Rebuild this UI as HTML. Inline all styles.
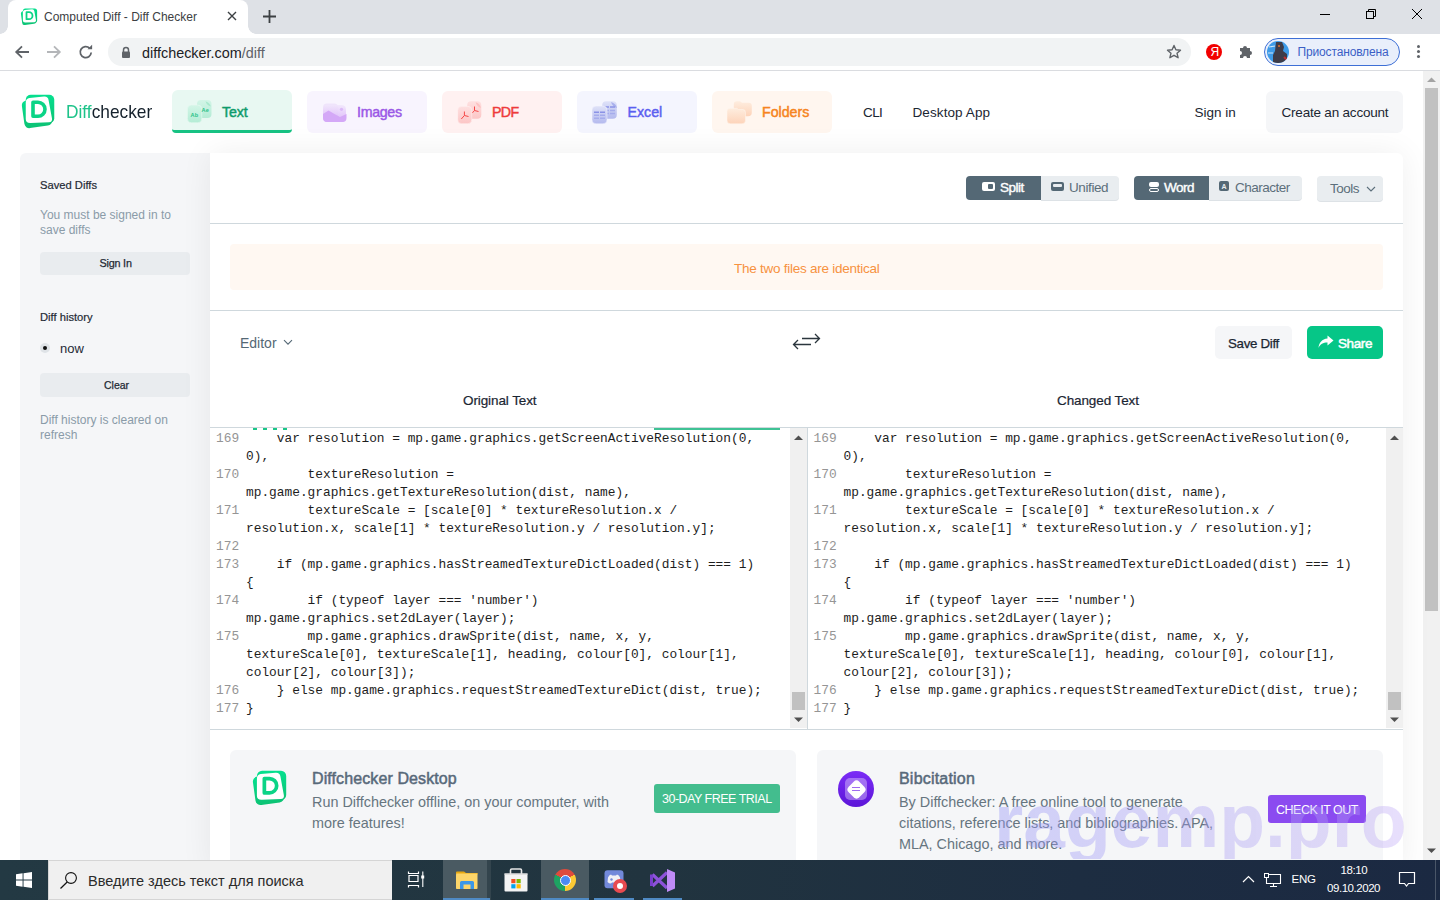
<!DOCTYPE html>
<html><head><meta charset="utf-8">
<style>
*{margin:0;padding:0;box-sizing:border-box}
html,body{width:1440px;height:900px;overflow:hidden;background:#fff;font-family:"Liberation Sans",sans-serif;color:#212529}
.a{position:absolute}
.t{position:absolute;white-space:pre;line-height:1}
.mono{font-family:"Liberation Mono",monospace}
/* chrome */
#strip{left:0;top:0;width:1440px;height:34px;background:#dee1e6}
#tab{left:8px;top:0;width:240px;height:34px;background:#fff;border-radius:8px 8px 0 0}
#tab:before,#tab:after{content:"";position:absolute;bottom:0;width:8px;height:8px;background:radial-gradient(circle at 0 0,transparent 8px,#fff 8.5px)}
#tab:before{left:-8px;background:radial-gradient(circle at 0 0,transparent 7.5px,#fff 8px)}
#tab:after{right:-8px;background:radial-gradient(circle at 100% 0,transparent 7.5px,#fff 8px)}
#toolbar{left:0;top:34px;width:1440px;height:36px;background:#fff}
#tbline{left:0;top:70px;width:1440px;height:1px;background:#dadce0}
#omni{left:108px;top:38px;width:1083px;height:28px;border-radius:14px;background:#f1f3f4}
/* page */
#vscroll{left:1423px;top:71px;width:17px;height:789px;background:#f1f1f1}
#vthumb{left:1425px;top:88px;width:13px;height:523px;background:#c1c1c1}
.navtab{position:absolute;top:91px;height:42px;border-radius:6px}
.navtxt{position:absolute;top:104.5px;font-size:14.2px;font-weight:400;line-height:1;white-space:pre;letter-spacing:-0.3px;-webkit-text-stroke:0.45px currentColor}
#side{left:20px;top:153px;width:190px;height:720px;background:#f5f6f8;border-radius:6px 0 0 0}
#main{left:210px;top:153px;width:1193px;height:720px;background:#fff;border-radius:0 6px 0 0;box-shadow:0 0 32px rgba(0,0,0,0.065)}
.sbtn{position:absolute;left:40px;width:150px;height:23px;background:#e9ecef;border-radius:4px}
.tog{position:absolute;top:176px;height:24px}
.hr{position:absolute;left:210px;width:1193px;height:1px;background:#cfd8dd}
.code{position:absolute;font-family:"Liberation Mono",monospace;font-size:12.83px;line-height:18px;white-space:pre;color:#1d1d1d}
.ln{position:absolute;font-family:"Liberation Mono",monospace;font-size:12.83px;line-height:18px;white-space:pre;color:#959595}
#taskbar{left:0;top:860px;width:1440px;height:40px;background:linear-gradient(90deg,#233943 0%,#21343f 45%,#1d2d41 75%,#1b2942 100%)}
</style></head><body>

<svg width="0" height="0" style="position:absolute">
 <defs><linearGradient id="lgg" x1="0" y1="0" x2="0" y2="1"><stop offset="0" stop-color="#06e08f"/><stop offset="1" stop-color="#0cc274"/></linearGradient></defs></svg>
<!-- ============ CHROME ============ -->
<div id="strip" class="a"></div>
<div id="tab" class="a"></div>
<!-- favicon -->
<svg class="a" style="left:19.5px;top:8px" width="18" height="18" viewBox="0 0 36 36">
 <rect x="5.75" y="0.75" width="28.5" height="28.5" rx="5" fill="url(#lgg)"/>
 <rect x="3" y="5" width="28" height="28" rx="5" fill="url(#lgg)" transform="rotate(-8 17 19)"/>
 <path d="M5.75 8.5Q5.75 4.5 9.5 4L24 2.6Q28 2.3 28.6 6.2L32 24.5Q32.5 28 29 28.3L10.5 29Q5.75 29.2 5.75 25z" fill="#fff"/>
 <path d="M13 8.3h5a7 7 0 0 1 0 14h-5z" fill="none" stroke="#0bd486" stroke-width="3.6" stroke-linejoin="round"/>
 </svg>
<div class="t" style="left:44px;top:11px;font-size:12px;color:#3c4043">Computed Diff - Diff Checker</div>
<svg class="a" style="left:227px;top:11px" width="10" height="10" viewBox="0 0 10 10"><path d="M1 1L9 9M9 1L1 9" stroke="#3c4043" stroke-width="1.4"/></svg>
<svg class="a" style="left:262px;top:9px" width="15" height="15" viewBox="0 0 15 15"><path d="M7.5 1v13M1 7.5h13" stroke="#3c4043" stroke-width="1.8"/></svg>
<!-- window controls -->
<div class="a" style="left:1320px;top:14px;width:10px;height:1px;background:#000"></div>
<svg class="a" style="left:1365px;top:8px" width="12" height="12" viewBox="0 0 12 12"><path d="M3.5 3V1.5h7v7H9" fill="none" stroke="#000" stroke-width="1"/><rect x="1.5" y="3.5" width="7" height="7" fill="none" stroke="#000" stroke-width="1"/></svg>
<svg class="a" style="left:1411px;top:8px" width="12" height="12" viewBox="0 0 12 12"><path d="M1 1L11 11M11 1L1 11" stroke="#000" stroke-width="1"/></svg>

<div id="toolbar" class="a"></div>
<div id="tbline" class="a"></div>
<svg class="a" style="left:14px;top:44px" width="16" height="16" viewBox="0 0 16 16"><path d="M15 8H2.5M8 2.3L2.2 8L8 13.7" fill="none" stroke="#5f6368" stroke-width="1.8"/></svg>
<svg class="a" style="left:46px;top:44px" width="16" height="16" viewBox="0 0 16 16"><path d="M1 8H13.5M8 2.3L13.8 8L8 13.7" fill="none" stroke="#b4b6b9" stroke-width="1.8"/></svg>
<svg class="a" style="left:78px;top:44px" width="16" height="16" viewBox="0 0 16 16"><path d="M13.2 8.5A5.5 5.5 0 1 1 11.6 4.2" fill="none" stroke="#5f6368" stroke-width="1.8"/><path d="M9.5 5.3h4.6V0.8z" fill="#5f6368"/></svg>
<div id="omni" class="a"></div>
<svg class="a" style="left:121px;top:46px" width="10" height="13" viewBox="0 0 10 13"><path d="M2.5 6V4a2.5 2.5 0 0 1 5 0v2" fill="none" stroke="#5f6368" stroke-width="1.5"/><rect x="1" y="5.5" width="8" height="6.5" rx="1" fill="#5f6368"/></svg>
<div class="t" style="left:142px;top:46px;font-size:14.4px;color:#202124">diffchecker.com<span style="color:#5f6368">/diff</span></div>
<!-- star -->
<svg class="a" style="left:1166px;top:44px" width="16" height="16" viewBox="0 0 16 16"><path d="M8 1.5l1.9 4.3 4.6.4-3.5 3 1.1 4.5L8 11.3l-4.1 2.4L5 9.2 1.5 6.2l4.6-.4z" fill="none" stroke="#5f6368" stroke-width="1.4" stroke-linejoin="round"/></svg>
<!-- yandex -->
<div class="a" style="left:1206px;top:44px;width:16px;height:16px;border-radius:50%;background:#f20000"></div>
<div class="t" style="left:1210.5px;top:45.5px;font-size:12px;color:#fff">Я</div>
<!-- puzzle -->
<svg class="a" style="left:1238px;top:44px" width="16" height="16" viewBox="0 0 16 16"><path d="M2 4h3a2 2 0 0 1 4 0h3v3a2 2 0 0 1 0 4v3H9a2 2 0 0 0-4 0H2v-3a2 2 0 0 0 0-4z" fill="#5f6368"/></svg>
<!-- profile pill -->
<div class="a" style="left:1264px;top:38px;width:136px;height:28px;border-radius:14px;background:#e9effb;border:1.5px solid #3d6fd6"></div>
<svg class="a" style="left:1267px;top:41px" width="22" height="22" viewBox="0 0 22 22"><defs><clipPath id="avc"><circle cx="11" cy="11" r="11"/></clipPath></defs><g clip-path="url(#avc)"><rect width="22" height="22" fill="#3d9be8"/><path d="M2 6l6-1M1 12l5 0" stroke="#cfe6f7" stroke-width="1.2"/><path d="M9 1h6l2 5-1 4 4 3v9H6v-8l2-4z" fill="#3e3c48"/><circle cx="12" cy="5" r="1" fill="#e0702a"/><path d="M17 16l3 3" stroke="#c03030" stroke-width="2"/></g></svg>
<div class="t" style="left:1297.5px;top:46px;font-size:12px;color:#3b5fc6;letter-spacing:-0.15px">Приостановлена</div>
<div class="a" style="left:1417px;top:45px;width:3px;height:3px;border-radius:50%;background:#5f6368;box-shadow:0 5px 0 #5f6368,0 10px 0 #5f6368"></div>

<!-- ============ PAGE ============ -->
<div id="vscroll" class="a"></div>
<div id="vthumb" class="a"></div>
<svg class="a" style="left:1427px;top:77px" width="9" height="6" viewBox="0 0 9 6"><path d="M0 5L4.5 0.5L9 5z" fill="#a3a3a3"/></svg>
<svg class="a" style="left:1427px;top:848px" width="9" height="6" viewBox="0 0 9 6"><path d="M0 0.5L4.5 5L9 0.5z" fill="#505050"/></svg>


<!-- ============ HEADER ============ -->
<svg class="a" style="left:20px;top:94px" width="36" height="36" viewBox="0 0 36 36">
 <rect x="5.75" y="0.75" width="28.5" height="28.5" rx="5" fill="url(#lgg)"/>
 <rect x="3" y="5" width="28" height="28" rx="5" fill="url(#lgg)" transform="rotate(-8 17 19)"/>
 <path d="M5.75 8.5Q5.75 4.5 9.5 4L24 2.6Q28 2.3 28.6 6.2L32 24.5Q32.5 28 29 28.3L10.5 29Q5.75 29.2 5.75 25z" fill="#fff"/>
 <path d="M13 8.3h5a7 7 0 0 1 0 14h-5z" fill="none" stroke="#0bd486" stroke-width="3.6" stroke-linejoin="round"/>
 </svg>
<div class="t" style="left:65.5px;top:102px;font-size:19px;transform:scaleX(0.91);transform-origin:0 0"><span style="color:#1ec38a">Diff</span><span style="color:#14202b">checker</span></div>

<div class="navtab" style="left:172px;width:120px;height:43px;top:90px;background:#e8f8f2;border-bottom:3px solid #17c283;border-radius:6px 6px 4px 4px"></div>
<svg class="a" style="left:186px;top:99px" width="28" height="26" viewBox="0 0 28 26">
  <defs><linearGradient id="tg" x1="0" y1="0" x2="0" y2="1"><stop offset="0" stop-color="#d3f5e7"/><stop offset="1" stop-color="#b4ecd5"/></linearGradient></defs>
  <rect x="11" y="1" width="14.5" height="18" rx="4" fill="url(#tg)"/>
  <path d="M19.5 2.2Q24 4 24.8 7.5Q21 6.5 19.5 2.2z" fill="#a6e8cc"/>
  <rect x="1.4" y="6" width="14.4" height="17.8" rx="4" fill="url(#tg)" stroke="#e9f8f2" stroke-width="0.6"/>
  <text x="4.6" y="17.8" font-size="5.6" font-weight="700" fill="#2cc288" font-family="Liberation Sans">Ab</text>
  <text x="15.6" y="12.5" font-size="5.6" font-weight="700" fill="#2cc288" font-family="Liberation Sans">Ae</text>
</svg>
<div class="navtxt" style="left:222px;color:#0e9b6b;letter-spacing:-0.1px">Text</div>

<div class="navtab" style="left:307px;width:120px;background:#f8f4fe"></div>
<svg class="a" style="left:322px;top:102px" width="25" height="21" viewBox="0 0 25 21">
  <defs><linearGradient id="ig" x1="0" y1="0" x2="0" y2="1"><stop offset="0" stop-color="#f1e6fc"/><stop offset="1" stop-color="#d6acf8"/></linearGradient></defs>
  <rect x="1" y="1.5" width="15" height="17" rx="4" fill="#efe4fb"/>
  <rect x="1" y="3" width="23" height="17" rx="4.5" fill="url(#ig)" opacity="0.85"/>
  <path d="M1 12l5.5-3.5 6 3.5 5.5 3 6.5-3v4a4 4 0 0 1-4 4H5a4 4 0 0 1-4-4z" fill="#d4a8f7"/>
  <circle cx="19.5" cy="7.3" r="1.6" fill="#dcbaf8"/>
</svg>
<div class="navtxt" style="left:357px;color:#9a58e6">Images</div>

<div class="navtab" style="left:442px;width:120px;background:#fff1f1"></div>
<svg class="a" style="left:456px;top:100px" width="27" height="25" viewBox="0 0 27 25">
  <defs><linearGradient id="pg" x1="0" y1="0" x2="0" y2="1"><stop offset="0" stop-color="#fee0e0"/><stop offset="1" stop-color="#fcc6c6"/></linearGradient></defs>
  <rect x="11.2" y="1.3" width="14.1" height="17.4" rx="4" fill="url(#pg)"/>
  <path d="M19.5 2.3Q24 3.5 25 8Q21 7 19.5 2.3z" fill="#fcc2c2"/>
  <rect x="1.7" y="6.3" width="14.1" height="17.4" rx="4" fill="url(#pg)" stroke="#fff4f4" stroke-width="0.5"/>
  <path d="M8.4 15.5V11.5M8.4 15.5L5.3 19M8.4 15.5L12.5 16.5" stroke="#f64747" stroke-width="1" fill="none"/>
  <path d="M18.5 10.5V6.5M18.5 10.5L16.5 12.8M18.5 10.5L22.5 11.5" stroke="#f64747" stroke-width="1" fill="none"/>
</svg>
<div class="navtxt" style="left:492px;color:#ee3b3b;letter-spacing:-0.6px">PDF</div>

<div class="navtab" style="left:577px;width:120px;background:#f4f5fe"></div>
<svg class="a" style="left:591px;top:100px" width="27" height="25" viewBox="0 0 27 25">
  <defs><linearGradient id="xg" x1="0" y1="0" x2="0" y2="1"><stop offset="0" stop-color="#dfe2f8"/><stop offset="1" stop-color="#b3b9ee"/></linearGradient></defs>
  <rect x="11.2" y="1.2" width="14.6" height="17.5" rx="4" fill="url(#xg)"/>
  <path d="M20 2Q25 3.5 26 8Q21.5 7 20 2z" fill="#a9b0ec"/>
  <path d="M13 7h5M19 7h5" stroke="#8a92e6" stroke-width="1.6"/>
  <path d="M13 10.5h5M19 10.5h5M13 13.5h5M19 13.5h5" stroke="#a5acec" stroke-width="1.6"/>
  <rect x="1" y="6" width="15" height="17.8" rx="4" fill="url(#xg)" stroke="#f4f5fe" stroke-width="0.5"/>
  <path d="M3 12.3h5M9 12.3h5" stroke="#8a92e6" stroke-width="1.6"/>
  <path d="M3 15.3h5M9 15.3h5M3 18.3h5M9 18.3h5" stroke="#a5acec" stroke-width="1.6"/>
</svg>
<div class="navtxt" style="left:627.5px;color:#5b5ff0;letter-spacing:0px">Excel</div>

<div class="navtab" style="left:712px;width:120px;background:#fff6ef"></div>
<svg class="a" style="left:726px;top:100px" width="27" height="25" viewBox="0 0 27 25">
  <defs><linearGradient id="fg" x1="0" y1="0" x2="0" y2="1"><stop offset="0" stop-color="#feeddf"/><stop offset="1" stop-color="#fdd3b9"/></linearGradient></defs>
  <path d="M7.8 4.5Q7.8 1.3 11 1.3h2.5Q15 1.3 16 2.8h6.8Q25.8 2.8 25.8 6V12.5Q25.8 16.3 22 16.3H11.5Q7.8 16.3 7.8 12.5z" fill="url(#fg)"/>
  <path d="M1 11.3Q1 8.3 4 8.3h6.5Q11.5 8.3 12.3 9.5h4.7Q19.5 9.5 19.5 12.5V20.3Q19.5 23.8 16 23.8H4.5Q1 23.8 1 20.3z" fill="url(#fg)" stroke="#fff6ef" stroke-width="0.5"/>
</svg>
<div class="navtxt" style="left:762px;color:#f68420;letter-spacing:0px">Folders</div>

<div class="t" style="left:863px;top:105.5px;font-size:13.5px;color:#1b2632;letter-spacing:-0.6px">CLI</div>
<div class="t" style="left:912.5px;top:105.5px;font-size:13.5px;color:#1b2632;letter-spacing:0.1px">Desktop App</div>
<div class="t" style="left:1194.5px;top:105.5px;font-size:13.5px;color:#1b2632;letter-spacing:0px">Sign in</div>
<div class="a" style="left:1266px;top:91px;width:137px;height:42px;border-radius:6px;background:#f5f6f8"></div>
<div class="t" style="left:1281.5px;top:105.5px;font-size:13.5px;color:#1b2632;letter-spacing:-0.2px">Create an account</div>


<!-- ============ SIDEBAR ============ -->
<div id="side" class="a"></div>
<div class="t" style="left:40px;top:180px;font-size:11.2px;color:#1f2a35;-webkit-text-stroke:0.2px currentColor">Saved Diffs</div>
<div class="t" style="left:40px;top:207.5px;font-size:12px;color:#8a9ba8;line-height:15px">You must be signed in to
save diffs</div>
<div class="sbtn" style="top:252px"></div>
<div class="t" style="left:99.5px;top:258px;font-size:10.8px;color:#1f2a35;letter-spacing:-0.2px;-webkit-text-stroke:0.25px currentColor">Sign In</div>
<div class="t" style="left:40px;top:311.5px;font-size:11.2px;color:#1f2a35;-webkit-text-stroke:0.2px currentColor">Diff history</div>
<div class="a" style="left:40px;top:343px;width:10px;height:10px;border-radius:50%;background:#dfe3e7"></div>
<div class="a" style="left:43px;top:346px;width:4px;height:4px;border-radius:50%;background:#111"></div>
<div class="t" style="left:60px;top:342px;font-size:13px;color:#1f2a35">now</div>
<div class="sbtn" style="top:373px;height:24px"></div>
<div class="t" style="left:104px;top:380px;font-size:10.5px;color:#1f2a35;-webkit-text-stroke:0.25px currentColor">Clear</div>
<div class="t" style="left:40px;top:413px;font-size:12px;color:#8a9ba8;line-height:15px">Diff history is cleared on
refresh</div>

<!-- ============ MAIN PANEL ============ -->
<div id="main" class="a"></div>
<!-- toggles -->
<div class="tog a" style="left:966px;width:75px;background:#546875;border-radius:4px 0 0 4px"></div>
<div class="tog a" style="left:1041px;width:78px;background:#e9edf0;border-radius:0 4px 4px 0;box-shadow:0 1px 0 #dde2e6"></div>
<div class="a" style="left:982px;top:182px;width:13px;height:9px;border-radius:2px;background:#fff"></div>
<div class="a" style="left:988px;top:184px;width:5px;height:5px;border-radius:1px;background:#546875"></div>
<div class="t" style="left:1000px;top:181px;font-size:13.5px;color:#fff;letter-spacing:-0.5px;-webkit-text-stroke:0.4px currentColor">Split</div>
<div class="a" style="left:1051px;top:182px;width:13px;height:9px;border-radius:2px;background:#546875"></div>
<div class="a" style="left:1053px;top:184px;width:9px;height:3px;border-radius:1px;background:#e9edf0"></div>
<div class="t" style="left:1069px;top:181px;font-size:13.5px;color:#5c6f7b;letter-spacing:-0.4px">Unified</div>

<div class="tog a" style="left:1134px;width:75px;background:#546875;border-radius:4px 0 0 4px"></div>
<div class="tog a" style="left:1209px;width:93px;background:#e9edf0;border-radius:0 4px 4px 0;box-shadow:0 1px 0 #dde2e6"></div>
<div class="a" style="left:1149px;top:182px;width:10px;height:5px;border-radius:2px;background:#fff"></div>
<div class="a" style="left:1149px;top:188px;width:10px;height:4px;border-radius:2px;border:1.2px solid #fff"></div>
<div class="t" style="left:1164px;top:181px;font-size:13.5px;color:#fff;letter-spacing:-0.5px;-webkit-text-stroke:0.4px currentColor">Word</div>
<div class="a" style="left:1219px;top:181px;width:10px;height:10px;border-radius:2px;background:#546875"></div>
<div class="t" style="left:1221.5px;top:183px;font-size:7px;font-weight:700;color:#e9edf0">A</div>
<div class="t" style="left:1235px;top:181px;font-size:13.5px;color:#5c6f7b;letter-spacing:-0.5px">Character</div>

<div class="tog a" style="left:1317px;width:66px;background:#e9edf0;border-radius:4px;height:25px;box-shadow:0 1px 0 #dde2e6"></div>
<div class="t" style="left:1330px;top:182px;font-size:13.5px;color:#5c6f7b;letter-spacing:-0.5px">Tools</div>
<svg class="a" style="left:1366px;top:186px" width="10" height="6" viewBox="0 0 10 6"><path d="M1 1l4 4 4-4" fill="none" stroke="#5c6f7b" stroke-width="1.1"/></svg>

<div class="hr" style="top:223px"></div>
<!-- banner -->
<div class="a" style="left:230px;top:244px;width:1153px;height:46px;background:#fff8f2;border-radius:4px"></div>
<div class="t" style="left:734px;top:262px;font-size:13.5px;color:#f7923f;letter-spacing:-0.25px">The two files are identical</div>
<div class="hr" style="top:310px"></div>

<!-- editor row -->
<div class="t" style="left:240px;top:336px;font-size:14px;color:#546875">Editor</div>
<svg class="a" style="left:283px;top:339px" width="10" height="7" viewBox="0 0 10 7"><path d="M1 1.2l4 4 4-4" fill="none" stroke="#546875" stroke-width="1.1"/></svg>
<svg class="a" style="left:792px;top:332px" width="29" height="19" viewBox="0 0 29 19"><path d="M10 6.5h17.5M23 2l4.5 4.5L23 11M19 12.5H1.5M6 8l-4.5 4.5L6 17" fill="none" stroke="#2b363d" stroke-width="1.3"/></svg>
<div class="a" style="left:1215px;top:326px;width:77px;height:33px;background:#f5f6f8;border-radius:5px"></div>
<div class="t" style="left:1228px;top:337px;font-size:13.3px;color:#1b2632;letter-spacing:-0.3px;-webkit-text-stroke:0.25px currentColor">Save Diff</div>
<div class="a" style="left:1307px;top:326px;width:76px;height:33px;background:#06c687;border-radius:5px"></div>
<svg class="a" style="left:1318px;top:335px" width="16" height="14" viewBox="0 0 16 14"><path d="M9.5 0.5L15.5 5.5L9.5 10.5V7.5C5 7.5 2.3 9 0.5 13C1 7.5 4 4 9.5 3.5z" fill="#fff"/></svg>
<div class="t" style="left:1338px;top:337px;font-size:13.5px;color:#fff;letter-spacing:-0.4px;-webkit-text-stroke:0.5px currentColor">Share</div>

<div class="t" style="left:463px;top:394px;font-size:13.5px;color:#1b2632;letter-spacing:-0.1px;-webkit-text-stroke:0.2px currentColor">Original Text</div>
<div class="t" style="left:1057px;top:394px;font-size:13.5px;color:#1b2632;letter-spacing:-0.1px;-webkit-text-stroke:0.2px currentColor">Changed Text</div>


<!-- ============ EDITOR ============ -->
<div class="hr" style="top:427px"></div>
<div class="a" style="left:252.5px;top:428px;width:35px;height:1.5px;background:repeating-linear-gradient(90deg,#1bc688 0 4.5px,transparent 4.5px 10px)"></div>
<div class="a" style="left:654px;top:428px;width:126px;height:2px;background:#3fc294"></div>

<div class="ln" style="left:216px;top:430px">169

170

171

172
173

174

175


176
177</div>
<div class="code" style="left:246px;top:430px">    var resolution = mp.game.graphics.getScreenActiveResolution(0,
0),
        textureResolution =
mp.game.graphics.getTextureResolution(dist, name),
        textureScale = [scale[0] * textureResolution.x /
resolution.x, scale[1] * textureResolution.y / resolution.y];

    if (mp.game.graphics.hasStreamedTextureDictLoaded(dist) === 1)
{
        if (typeof layer === 'number')
mp.game.graphics.set2dLayer(layer);
        mp.game.graphics.drawSprite(dist, name, x, y,
textureScale[0], textureScale[1], heading, colour[0], colour[1],
colour[2], colour[3]);
    } else mp.game.graphics.requestStreamedTextureDict(dist, true);
}</div>

<div class="ln" style="left:813.5px;top:430px">169

170

171

172
173

174

175


176
177</div>
<div class="code" style="left:843.5px;top:430px">    var resolution = mp.game.graphics.getScreenActiveResolution(0,
0),
        textureResolution =
mp.game.graphics.getTextureResolution(dist, name),
        textureScale = [scale[0] * textureResolution.x /
resolution.x, scale[1] * textureResolution.y / resolution.y];

    if (mp.game.graphics.hasStreamedTextureDictLoaded(dist) === 1)
{
        if (typeof layer === 'number')
mp.game.graphics.set2dLayer(layer);
        mp.game.graphics.drawSprite(dist, name, x, y,
textureScale[0], textureScale[1], heading, colour[0], colour[1],
colour[2], colour[3]);
    } else mp.game.graphics.requestStreamedTextureDict(dist, true);
}</div>

<!-- left scrollbar -->
<div class="a" style="left:790px;top:428px;width:17px;height:300px;background:#f0f0f0"></div>
<div class="a" style="left:807px;top:428px;width:1px;height:301px;background:#cfd8dd"></div>
<svg class="a" style="left:794px;top:435px" width="9" height="6" viewBox="0 0 9 6"><path d="M0 5L4.5 0.5L9 5z" fill="#505050"/></svg>
<div class="a" style="left:792px;top:692px;width:13px;height:18px;background:#c1c1c1"></div>
<svg class="a" style="left:794px;top:717px" width="9" height="6" viewBox="0 0 9 6"><path d="M0 0.5L4.5 5L9 0.5z" fill="#505050"/></svg>
<!-- right scrollbar -->
<div class="a" style="left:1386px;top:428px;width:17px;height:300px;background:#f0f0f0"></div>
<svg class="a" style="left:1390px;top:435px" width="9" height="6" viewBox="0 0 9 6"><path d="M0 5L4.5 0.5L9 5z" fill="#505050"/></svg>
<div class="a" style="left:1388px;top:692px;width:13px;height:18px;background:#c1c1c1"></div>
<svg class="a" style="left:1390px;top:717px" width="9" height="6" viewBox="0 0 9 6"><path d="M0 0.5L4.5 5L9 0.5z" fill="#505050"/></svg>
<div class="hr" style="top:729px"></div>

<!-- ============ CARDS ============ -->
<div class="a" style="left:230px;top:750px;width:566px;height:130px;background:#f5f6f8;border-radius:6px"></div>
<svg class="a" style="left:251px;top:770px" width="37" height="37" viewBox="0 0 36 36">
 <rect x="5.75" y="0.75" width="28.5" height="28.5" rx="5" fill="url(#lgg)"/>
 <rect x="3" y="5" width="28" height="28" rx="5" fill="url(#lgg)" transform="rotate(-8 17 19)"/>
 <path d="M5.75 8.5Q5.75 4.5 9.5 4L24 2.6Q28 2.3 28.6 6.2L32 24.5Q32.5 28 29 28.3L10.5 29Q5.75 29.2 5.75 25z" fill="#fff"/>
 <path d="M13 8.3h5a7 7 0 0 1 0 14h-5z" fill="none" stroke="#0bd486" stroke-width="3.6" stroke-linejoin="round"/>
 </svg>
<div class="t" style="left:312px;top:770.5px;font-size:16px;color:#58697a;letter-spacing:0.1px;-webkit-text-stroke:0.5px currentColor">Diffchecker Desktop</div>
<div class="t" style="left:312px;top:792px;font-size:14.4px;color:#66757f;line-height:20.8px">Run Diffchecker offline, on your computer, with
more features!</div>
<div class="a" style="left:654px;top:784px;width:126px;height:29px;background:#43bd8e;border-radius:3px"></div>
<div class="t" style="left:662px;top:793px;font-size:12.5px;color:#fff;letter-spacing:-0.5px">30-DAY FREE TRIAL</div>

<div class="a" style="left:817px;top:750px;width:566px;height:130px;background:#f5f6f8;border-radius:6px"></div>
<div class="a" style="left:838px;top:771px;width:36px;height:36px;border-radius:50%;background:linear-gradient(180deg,#7b2cf6,#5c15d8)"></div>
<div class="a" style="left:845px;top:778px;width:22px;height:22px;border-radius:5px;background:rgba(255,255,255,0.35)"></div>
<div class="a" style="left:848.5px;top:781.5px;width:15px;height:15px;border-radius:4px;background:#fff;transform:rotate(45deg)"></div>
<div class="a" style="left:852px;top:786.5px;width:7.5px;height:1.2px;background:#a06cf0;box-shadow:0 3px 0 #a06cf0"></div>
<div class="t" style="left:899px;top:770.5px;font-size:16px;color:#58697a;letter-spacing:0.2px;-webkit-text-stroke:0.5px currentColor">Bibcitation</div>
<div class="t" style="left:899px;top:792px;font-size:14.4px;color:#66757f;line-height:20.8px">By Diffchecker: A free online tool to generate
citations, reference lists, and bibliographies. APA,
MLA, Chicago, and more.</div>
<div class="a" style="left:1268px;top:795px;width:98px;height:28px;background:#8b4bf0;border-radius:3px"></div>
<div class="t" style="left:1276px;top:804px;font-size:12.5px;color:#fff;letter-spacing:-0.5px">CHECK IT OUT</div>


<!-- ============ WATERMARK ============ -->
<div class="t" style="left:993.5px;top:782.5px;font-size:76px;font-weight:700;letter-spacing:0px;line-height:1;color:transparent;background:linear-gradient(90deg,rgba(150,150,245,0.40),rgba(185,160,245,0.34));-webkit-background-clip:text;background-clip:text;z-index:5;transform:scaleX(0.987);transform-origin:0 0">ragemp.pro</div>

<!-- ============ TASKBAR ============ -->
<div id="taskbar" class="a" style="z-index:3"></div>
<div style="position:absolute;left:0;top:0;z-index:4">
<svg class="a" style="left:16px;top:872px" width="16" height="16" viewBox="0 0 17 17"><path d="M0 2.4L7 1.4V8H0zM8 1.2L17 0V8H8zM0 9H7V15.6L0 14.6zM8 9H17V17L8 15.8z" fill="#fff"/></svg>
<div class="a" style="left:48px;top:860px;width:344px;height:40px;background:#f0f0f0;border:1px solid #d5d5d5;border-right:none"></div>
<svg class="a" style="left:59px;top:870px" width="20" height="20" viewBox="0 0 20 20"><circle cx="12" cy="8" r="5.4" fill="none" stroke="#111" stroke-width="1.1"/><path d="M8.2 12L1.5 18.5" stroke="#111" stroke-width="1.2"/></svg>
<div class="t" style="left:88px;top:873.5px;font-size:14.5px;color:#2b2b2b">Введите здесь текст для поиска</div>
<!-- task view -->
<svg class="a" style="left:406px;top:870px" width="20" height="19" viewBox="0 0 20 19"><path d="M2.5 1.5v2h10v-2M3 5.5h9v6H3zM2.5 17.5v-2h10v2" fill="none" stroke="#fff" stroke-width="1.2"/><path d="M16.8 1.5v15.5" stroke="#fff" stroke-width="1.1"/><rect x="15.2" y="5.5" width="3" height="3" fill="#fff"/></svg>
<!-- explorer -->
<div class="a" style="left:443px;top:860px;width:44px;height:40px;background:#4a5a62"></div>
<div class="a" style="left:487px;top:860px;width:3.5px;height:40px;background:#33444d"></div>
<div class="a" style="left:443px;top:898px;width:47px;height:2px;background:#4f8ac4"></div>
<svg class="a" style="left:456px;top:870.5px" width="22" height="19" viewBox="0 0 22 19"><path d="M0 1.5a1 1 0 0 1 1-1h7l2 1.5h11a1 1 0 0 1 1 1V3H0z" fill="#e8a811"/><rect x="0" y="2.5" width="21.5" height="15.5" rx="0.8" fill="#fdd56a"/><path d="M4 18v-6.5a1.5 1.5 0 0 1 1.5-1.5h11a1.5 1.5 0 0 1 1.5 1.5V18h-3.5v-4.5h-7V18z" fill="#3c97e8"/></svg>
<!-- store -->
<svg class="a" style="left:503.5px;top:868px" width="24" height="24" viewBox="0 0 24 24"><path d="M6.5 6.5V2.2Q6.5 1 7.7 1h8.6Q17.5 1 17.5 2.2V6.5" fill="none" stroke="#e6e6e6" stroke-width="1.6"/><path d="M0.5 5.5h23v17a1 1 0 0 1-1 1h-21a1 1 0 0 1-1-1z" fill="#f4f4f4"/><rect x="0.5" y="5.5" width="23" height="1.2" fill="#d8d8d8"/><rect x="7.3" y="11" width="4.2" height="4.2" fill="#f25022"/><rect x="12.5" y="11" width="4.2" height="4.2" fill="#7fba00"/><rect x="7.3" y="16.2" width="4.2" height="4.2" fill="#00a4ef"/><rect x="12.5" y="16.2" width="4.2" height="4.2" fill="#ffb900"/></svg>
<!-- chrome -->
<div class="a" style="left:541px;top:860px;width:48px;height:40px;background:#4a5a62"></div>
<div class="a" style="left:541px;top:898px;width:48px;height:2px;background:#4f8ac4"></div>
<div class="a" style="left:554px;top:869px;width:22px;height:22px;border-radius:50%;background:conic-gradient(from -60deg,#de4b3c 0 120deg,#fcc934 120deg 240deg,#1ea362 240deg 360deg)"></div>
<div class="a" style="left:559.5px;top:874.5px;width:11px;height:11px;border-radius:50%;background:#4a8af4;border:1.6px solid #fff"></div>
<!-- discord -->
<svg class="a" style="left:604px;top:870px" width="25" height="24" viewBox="0 0 25 24"><rect x="0.5" y="0.3" width="19" height="18" rx="3" fill="#7289da"/><path d="M4 7.5Q5 5 7 4.5L8 5.5h4L13 4.5Q15 5 16 7.5L16.5 12Q15 13.5 13 13.5L12 12.5H8L7 13.5Q5 13.5 3.5 12z" fill="#f0f0f5"/><circle cx="7.5" cy="9.5" r="1.2" fill="#7289da"/><circle cx="16" cy="16" r="7" fill="#e84a4f"/><circle cx="16" cy="16" r="3" fill="#fff"/></svg>
<div class="a" style="left:594px;top:898px;width:40px;height:2px;background:#4f8ac4"></div>
<!-- vs -->
<svg class="a" style="left:650px;top:868px" width="26" height="25" viewBox="0 0 26 25"><path d="M2.5 6.5L17 20M2.5 18L17 4.5" stroke="#8d52da" stroke-width="3.2"/><path d="M1.5 6.5v11.5" stroke="#7a3fce" stroke-width="3"/><path d="M17 1L25 4.5V20.5L17 24z" fill="#c08bf7"/></svg>
<div class="a" style="left:643px;top:898px;width:39px;height:2px;background:#4f8ac4"></div>
<!-- tray -->
<svg class="a" style="left:1242px;top:875px" width="13" height="8" viewBox="0 0 13 8"><path d="M1 7L6.5 1.5L12 7" fill="none" stroke="#fff" stroke-width="1.2"/></svg>
<svg class="a" style="left:1264px;top:873px" width="18" height="15" viewBox="0 0 18 15"><path d="M2.5 1.5h14v9h-14zM9.5 10.5v3M6 13.5h7" fill="none" stroke="#fff" stroke-width="1.1"/><rect x="0.5" y="0.5" width="4" height="4" fill="#1b2a40" stroke="#fff" stroke-width="1"/></svg>
<div class="t" style="left:1291.5px;top:874px;font-size:11.5px;color:#fff;letter-spacing:-0.2px">ENG</div>
<div class="t" style="left:1340.5px;top:865px;font-size:11.5px;color:#fff;letter-spacing:-0.4px">18:10</div>
<div class="t" style="left:1327px;top:883px;font-size:11.5px;color:#fff;letter-spacing:-0.45px">09.10.2020</div>
<svg class="a" style="left:1398px;top:871px" width="18" height="18" viewBox="0 0 18 18"><path d="M1.5 1.5h15v11h-6l-2 2.5-2-2.5h-5z" fill="none" stroke="#fff" stroke-width="1.2"/></svg>
<div class="a" style="left:1435px;top:860px;width:1px;height:40px;background:#4a5668"></div>
</div>

</body></html>
